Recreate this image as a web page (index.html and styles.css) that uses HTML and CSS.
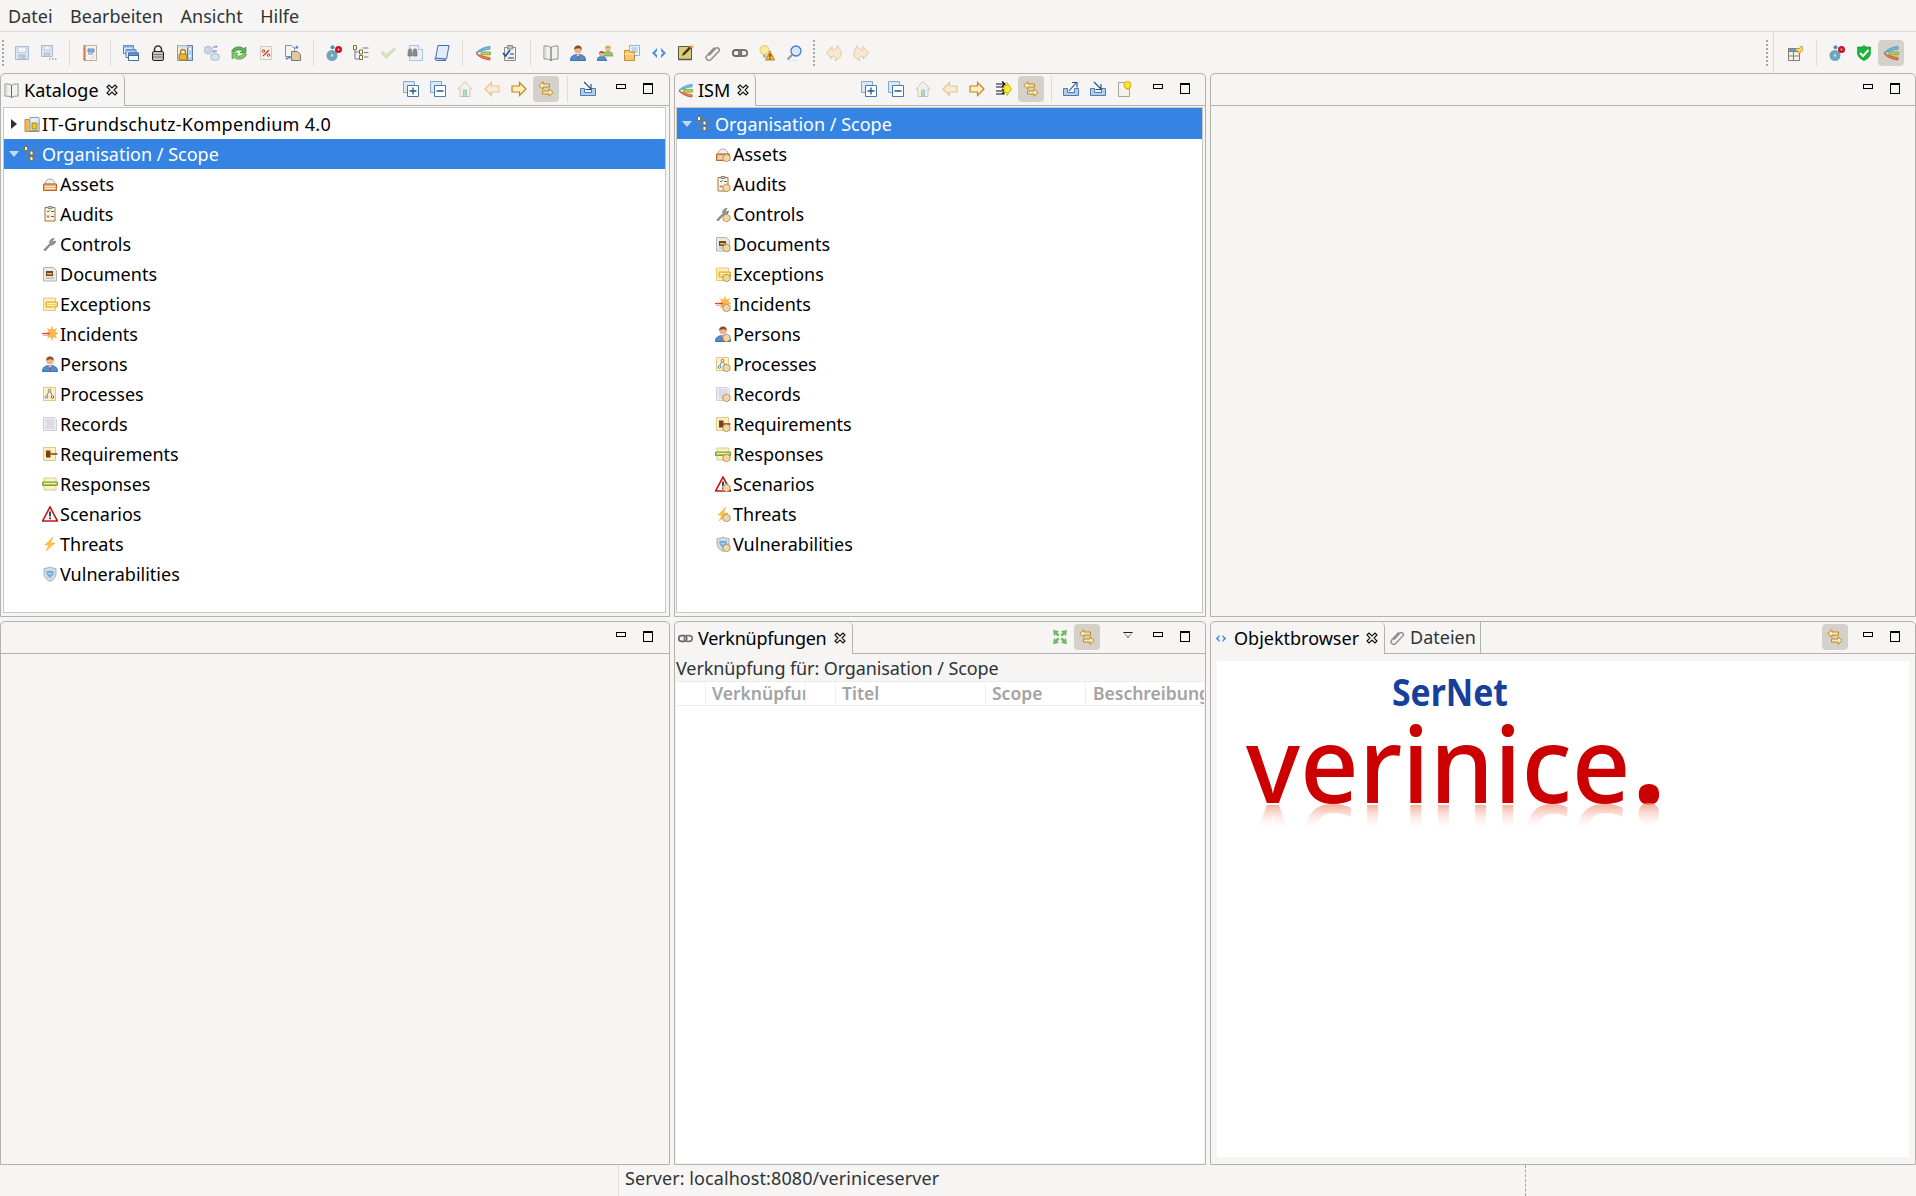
FILE: index.html
```html
<!DOCTYPE html>
<html lang="de">
<head>
<meta charset="utf-8">
<title>verinice</title>
<link rel="stylesheet" href="styles.css">
</head>
<body>
<svg class="sprite" xmlns="http://www.w3.org/2000/svg">
<symbol id="save" viewBox="0 0 16 16"><path d="M1.500 1.500h13v13h-13z" fill="#dde4ee" stroke="#a9b9cf"/><path d="M4 2v5.500h8V2z" fill="#f3f5f8" stroke="#c0cad8"/><path d="M5 14.500v-4.500h6v4.500z" fill="#c9d3e0" stroke="#a9b9cf"/><path d="M9 11.500v2" stroke="#8fa2bb"/></symbol>
<symbol id="saveall" viewBox="0 0 16 16"><path d="M.5 .5h11v11H.5z" fill="#dde4ee" stroke="#a9b9cf"/><path d="M3 1v4h6V1z" fill="#f3f5f8" stroke="#c0cad8"/><path d="M3.500 11.500V8h5v3.500z" fill="#c9d3e0" stroke="#a9b9cf"/><path d="M8 14h1.500M11 14h1.500M14 14h1.500" stroke="#8fa2bb" stroke-width="1.500"/></symbol>
<symbol id="notebook" viewBox="0 0 16 16"><path d="M2.500 .5h12v15h-12z" fill="#f6f3ec" stroke="#b9b2a2"/><path d="M2.500 .5v15" stroke="#c9622f" stroke-width="2"/><path d="M2 2.500h2M2 5h2M2 7.500h2M2 10h2M2 12.500h2" stroke="#e9a47a"/><path d="M6 4h6v3H6zM6 9h5" fill="#8fb1dd" stroke="#5f8ac4"/><path d="M9 14l4-4" stroke="#cfcabc"/></symbol>
<symbol id="windows" viewBox="0 0 16 16"><path d="M.5 .5h10v8H.5z" fill="#dbe7f6" stroke="#4f7db5"/><path d="M.5 .5h10v2H.5z" fill="#7ea8dc"/><path d="M3 4.500h10v8H3z" fill="#e9f0fa" stroke="#4f7db5"/><path d="M3 4.500h10v2H3z" fill="#7ea8dc"/><path d="M5.500 8h10v7.500h-10z" fill="#fff" stroke="#3e6ea8"/><path d="M5.500 8h10v2.500h-10z" fill="#6d9bd6" stroke="#3e6ea8"/></symbol>
<symbol id="padlock" viewBox="0 0 16 16"><path d="M4.500 7V4.500a3.500 3.500 0 0 1 7 0V7" fill="none" stroke="#333" stroke-width="1.600"/><rect x="2.500" y="6.500" width="11" height="9" rx="1.500" fill="#c4c4c4" stroke="#222"/><path d="M3 9.500h10M3 12h10" stroke="#777"/></symbol>
<symbol id="lockpanel" viewBox="0 0 16 16"><path d="M.5 .5h15v15H.5z" fill="#f1eedf" stroke="#a39c70"/><path d="M10.500 .5h5v15h-5z" fill="#b5cfea" stroke="#5c7ca6"/><path d="M12 3h2v2h-2zM12 10h2v2h-2z" fill="#fff"/><path d="M1 .5h9.500v2H1z" fill="#c5dbf1"/><path d="M3.500 9V7a2.500 2.500 0 0 1 5 0v2" fill="none" stroke="#a5812a" stroke-width="1.300"/><rect x="2" y="9" width="8" height="6" rx="1" fill="#e7b732" stroke="#9a7516"/></symbol>
<symbol id="cubes" viewBox="0 0 16 16"><path d="M4 1l4 2v4L4 9 0 7V3z" fill="#c9d7e6" stroke="#a6bbd2"/><path d="M11 8l4 2v4l-4 2-4-2v-4z" fill="#d5e1ec" stroke="#a6bbd2"/><path d="M9 2h4l-1-1.500M13 6H9l1 1.500" fill="none" stroke="#6a70d8"/></symbol>
<symbol id="refresh" viewBox="0 0 16 16"><path d="M.5 7a7.500 6.500 0 0 1 12.500-3.500l2-1.500v6h-6l2-2a4.500 4 0 0 0-7 1z" fill="#5eb350" stroke="#3a8a30" stroke-width=".6"/><path d="M15.500 9a7.500 6.500 0 0 1-12.500 3.500L1 14V8h6l-2 2a4.500 4 0 0 0 7-1z" fill="#84c96e" stroke="#3a8a30" stroke-width=".6"/></symbol>
<symbol id="percent" viewBox="0 0 16 16"><path d="M2.500 1.500h11v13h-11z" fill="#f4f2ee" stroke="#cdcac4"/><path d="M5 11l6-6" stroke="#d33c1d" stroke-width="1.300"/><circle cx="5.500" cy="6" r="1.300" fill="none" stroke="#d33c1d"/><circle cx="10.500" cy="10" r="1.300" fill="none" stroke="#d33c1d"/></symbol>
<symbol id="transfer" viewBox="0 0 16 16"><path d="M.5 .5h6l3 3v8H.5z" fill="#f5f5f2" stroke="#8d8f90"/><path d="M6.500 6.500h6l3 3v6h-9z" fill="#dbc9a5" stroke="#8b7a58"/><path d="M9 3h4M11 1l2 2M1 13h4l-1.500-1.500M1 13l1.500 1.500" fill="none" stroke="#3f7fd1" stroke-width="1.200"/></symbol>
<symbol id="gismo" viewBox="0 0 16 16"><circle cx="6" cy="10.500" r="5.500" fill="#6ea6be"/><circle cx="6" cy="10.500" r="1.200" fill="#cfe2ea"/><circle cx="6.500" cy="2.200" r="2" fill="#4d94b4"/><circle cx="12.500" cy="4.500" r="3.500" fill="#c81420"/><circle cx="12.500" cy="4.500" r="1" fill="#f6c8c8"/></symbol>
<symbol id="tree" viewBox="0 0 16 16"><path d="M2 3v11M2 7h5M2 14h5M9.500 3h6M11 7.500h4.500M11 12h4.500" fill="none" stroke="#6f7f9a"/><path d="M.5 .5h3v4h-3zM6.500 5h3v4h-3zM6.500 10.500h3v4h-3z" fill="#fff" stroke="#8a6d2c"/></symbol>
<symbol id="check" viewBox="0 0 16 16"><path d="M1 8l2.500-1.500L6 9.500 14 3l1.500 1.500-9 9z" fill="#d6e2c0" stroke="#c5d3aa" stroke-width=".6"/></symbol>
<symbol id="binoc" viewBox="0 0 16 16"><path d="M2.500 .5h9l4 4v11h-13z" fill="#e8f0fa" stroke="#a9c3e3"/><path d="M11.500 .5v4h4" fill="#fff" stroke="#a9c3e3"/><path d="M1 7l1-3h2l1 3v4H1zM6 7l1-3h2l1 3v4H6z" fill="#8a8a8a" stroke="#6a6a6a" stroke-width=".6"/></symbol>
<symbol id="scroll" viewBox="0 0 16 16"><path d="M4 .5h11l-2.500 13.500H1.500z" fill="#e2ecf8" stroke="#3e6fb3"/><path d="M1 13c0 2 1 2.500 2 2.500h9c-1 0-1.500-.5-1.500-1.500z" fill="#c2d6ef" stroke="#3e6fb3"/></symbol>
<symbol id="ism" viewBox="0 0 16 16"><path d="M15 1.500C9 2 4 4.500 1 8c4-1.500 9-3.500 14-4z" fill="#7bc1e8" stroke="#3e89c2" stroke-width=".8"/><path d="M6 7h9.500v2.800H6z" fill="#b7d44f" stroke="#78a22b" stroke-width=".8"/><path d="M1 8.500c3 3.500 8 6 14 6.500v-2.500c-5-.5-10-2-14-4z" fill="#ef7f5a" stroke="#c64a25" stroke-width=".8"/></symbol>
<symbol id="clipcheck" viewBox="0 0 16 16"><path d="M2.500 2.500h11v13h-11z" fill="#eef0f3" stroke="#8f8879"/><path d="M5.500 .5h5V4h-5z" fill="#c8c3b5" stroke="#8f8879"/><path d="M1 8l2.500 3L8 5" fill="none" stroke="#2058b8" stroke-width="1.800"/><path d="M8 9h4M6 13h6" stroke="#3a3a3a"/></symbol>
<symbol id="book" viewBox="0 0 16 16"><path d="M8 2.500C6 1 3 .8 1 1v13c2-.2 5 0 7 1.500 2-1.500 5-1.700 7-1.500V1c-2-.2-5 0-7 1.500z" fill="#f0f3f0" stroke="#8b8d86"/><path d="M8 2.500v13" stroke="#5a5a55"/><path d="M2.500 2.500v10" stroke="#d6dcd5" stroke-width="2"/></symbol>
<symbol id="person" viewBox="0 0 16 16"><path d="M.5 15.500c0-4 2.500-6 7.500-6s7.500 2 7.500 6z" fill="#4f8ed0" stroke="#2b5c94" stroke-width=".8"/><path d="M6.500 9.500L8 13l1.500-3.500z" fill="#fff"/><path d="M7.500 10.500h1l.5 3H7z" fill="#c0392b"/><circle cx="8" cy="5" r="3.600" fill="#eab48c"/><path d="M4.300 5c-.5-3.500 2-4.500 3.700-4.500s4.200 1 3.700 4.500C11 3.500 9.500 3 8 3.200S5 3.500 4.300 5z" fill="#8a4c20"/></symbol>
<symbol id="persons" viewBox="0 0 16 16"><path d="M6 11c0-3 2-4.500 5-4.500s5 1.500 5 4.500z" fill="#9cc56b" stroke="#6c9440" stroke-width=".7"/><circle cx="11" cy="3.500" r="2.700" fill="#eeb888"/><path d="M8.300 3c0-3 5.400-3 5.400 0-1.500-1-3.900-1-5.400 0z" fill="#d59532"/><path d="M0 16c0-3.200 2-4.500 4.800-4.500S9.500 12.800 9.500 16z" fill="#4f8ed0" stroke="#2b5c94" stroke-width=".7"/><circle cx="4.800" cy="8.800" r="2.700" fill="#eab48c"/><path d="M2 8.500c0-3 5.500-3 5.500 0-1.500-1-4-1-5.500 0z" fill="#8a4c20"/></symbol>
<symbol id="folderdoc" viewBox="0 0 16 16"><path d="M5.500 .5h10v10h-10z" fill="#eef4fb" stroke="#8fb1dd"/><path d="M7.500 3h6M7.500 5h6M7.500 7h6" stroke="#8fb1dd"/><path d="M.5 5.500h5l1 1.500h4v8.500H.5z" fill="#f7c671" stroke="#c98a24"/><path d="M.5 9h10" stroke="#fbe0ab" stroke-width="1.500"/></symbol>
<symbol id="code" viewBox="0 0 16 16"><path d="M6 3L1 8l5 5v-3L4 8l2-2zM10 3l5 5-5 5v-3l2-2-2-2z" fill="#4b93e2"/></symbol>
<symbol id="note" viewBox="0 0 16 16"><path d="M.5 1.500h13v13H.5z" fill="#d8cd80" stroke="#5d5730"/><path d="M.5 14.500h13" stroke="#5d5730" stroke-width="1.500"/><path d="M4 11l1-3 7-7 2.500 1-7.500 7.500z" fill="#4a3a10"/><path d="M11 1.500L14 0l1.500 1.500-1.500 2z" fill="#e8a838"/></symbol>
<symbol id="paperclip" viewBox="0 0 16 16"><path d="M4 10.500L11 3a2.200 2.200 0 0 1 3 3l-8 8.500a2.800 2.800 0 0 1-4-4l7.500-8" fill="none" stroke="#8f8f8f" stroke-width="1.500"/></symbol>
<symbol id="link" viewBox="0 0 16 16"><rect x=".8" y="5" width="8.500" height="6" rx="3" fill="none" stroke="#666" stroke-width="1.800"/><rect x="6.700" y="5" width="8.500" height="6" rx="3" fill="none" stroke="#777" stroke-width="1.800"/></symbol>
<symbol id="bulb" viewBox="0 0 16 16"><circle cx="5.500" cy="5" r="4.500" fill="#fae9a0" stroke="#e3c55c"/><path d="M4 9.500h3v3H4z" fill="#9cb4cc"/><path d="M11 6l4.500 9h-9z" fill="#f4b638" stroke="#c77d18"/><path d="M11 9v3M11 13v1.200" stroke="#222" stroke-width="1.200"/></symbol>
<symbol id="search" viewBox="0 0 16 16"><circle cx="10" cy="6" r="5" fill="#d8e5fa" stroke="#4a75d4" stroke-width="1.300"/><path d="M6.500 9.500l-5 5" stroke="#999" stroke-width="2.200"/><path d="M2 15.800h10" stroke="#ddd"/></symbol>
<symbol id="undo" viewBox="0 0 16 16"><path d="M12 .5C13 4 16 6 15 10c-.5 2.500-3 4.500-6 5.500 1-1.500 1-3-.5-4-1-.5-2-.5-3 0L6 14 .5 8 6 1.500 6 5c2 .5 4-1 6-4.500z" fill="#f6e7d2" stroke="#e5c89c"/></symbol>
<symbol id="redo" viewBox="0 0 16 16"><path d="M4 .5C3 4 0 6 1 10c.5 2.500 3 4.500 6 5.500-1-1.500-1-3 .5-4 1-.5 2-.5 3 0L10 14l5.500-6L10 1.500V5C8 5.500 6 4 4 .5z" fill="#f6e7d2" stroke="#e5c89c"/></symbol>
<symbol id="newview" viewBox="0 0 16 16"><path d="M1.500 3.500h11v12h-11z" fill="#f3f2ee" stroke="#857e6c"/><path d="M1.500 3.500h11v3h-11z" fill="#5f9ce0" stroke="#857e6c"/><path d="M6.500 6.500v9M1.500 11h11" stroke="#857e6c"/><path d="M11 3.500h2V1.500h2.500v2h.5V6h-2.500v2H11V6H9V3.500z" fill="#f8dc7a" stroke="#c1972a" stroke-width=".7"/></symbol>
<symbol id="shield" viewBox="0 0 16 16"><path d="M8 .5L10 2h4.500v6c0 3.500-3 6-6.500 7.500C4.500 14 1.500 11.500 1.500 8V2H6z" fill="#1cb33f" stroke="#128a2c" stroke-width=".6"/><path d="M4 8l3 3 5.500-6" fill="none" stroke="#fff" stroke-width="2"/></symbol>
<symbol id="expand" viewBox="0 0 16 16"><path d="M.5 .5h11v11H.5z" fill="#dbe7f3" stroke="#8aa8c8"/><path d="M4.500 4.500h11v11h-11z" fill="#fff" stroke="#4a7aa8"/><path d="M6.500 10h7M10 6.500v7" stroke="#135a9c" stroke-width="1.300"/></symbol>
<symbol id="collapse" viewBox="0 0 16 16"><path d="M.5 .5h11v11H.5z" fill="#dbe7f3" stroke="#8aa8c8"/><path d="M4.500 4.500h11v11h-11z" fill="#fff" stroke="#4a7aa8"/><path d="M6.500 10h7" stroke="#135a9c" stroke-width="1.300"/></symbol>
<symbol id="home" viewBox="0 0 16 16"><path d="M8 .5L1 8h2v7.500h10V8h2z" fill="#f2f0e9" stroke="#cbc7b7"/><path d="M6.500 9h3v6.500h-3z" fill="#b9dfa0" stroke="#9cc1dc"/></symbol>
<symbol id="back" viewBox="0 0 16 16"><path d="M1 8l6.500-6.500V5H15v6H7.500v3.500z" fill="#f7ecd8" stroke="#e6c58a" stroke-width="1.200"/></symbol>
<symbol id="forward" viewBox="0 0 16 16"><path d="M15 8L8.500 1.500V5H1v6h7.500v3.500z" fill="#fbeec6" stroke="#c98413" stroke-width="1.200"/></symbol>
<symbol id="sync" viewBox="0 0 16 16"><path d="M.8 4.500L5 .7v2.300h6.500v3H5v2.300z" fill="#f7e9c2" stroke="#c48612"/><path d="M15.200 11.500L11 7.700V10H4.500v3H11v2.300z" fill="#f7e9c2" stroke="#c48612"/></symbol>
<symbol id="filter" viewBox="0 0 16 16"><path d="M0 3h9M0 6h9M0 10h9M0 13h9M6 .5L9 3 6 5.500M6 8l3 2-3 3" fill="none" stroke="#111" stroke-width="1.200"/><path d="M8 4.500h3V1.500L15.500 8 11 14.500V11.500H8z" fill="#f4ee1c" stroke="#a9a40c" stroke-width=".7"/></symbol>
<symbol id="export" viewBox="0 0 16 16"><path d="M.5 7.500h4v4h7v-4h4v7H.5z" fill="#b5cdea" stroke="#4f7cb4"/><path d="M6 10l7-8M9 1.500h5v5" fill="none" stroke="#1c4f8e" stroke-width="1.100"/></symbol>
<symbol id="import" viewBox="0 0 16 16"><path d="M.5 7.500h4v4h7v-4h4v7H.5z" fill="#b5cdea" stroke="#4f7cb4"/><path d="M4 1l7 7M11 3v5.500H5.500" fill="none" stroke="#1c4f8e" stroke-width="1.100"/></symbol>
<symbol id="notebulb" viewBox="0 0 16 16"><path d="M1.500 1.500h11v14h-11z" fill="#f4f3ee" stroke="#a8a69c"/><circle cx="10.500" cy="4" r="3.600" fill="#f8e23c" stroke="#dcb21a"/><path d="M9 7h3v1.500H9z" fill="#dcb21a"/></symbol>
<symbol id="close" viewBox="0 0 12 12"><path d="M1 3l2-2 3 3 3-3 2 2-3 3 3 3-2 2-3-3-3 3-2-2 3-3z" fill="#fff" stroke="#111" stroke-width="1.100"/></symbol>
<symbol id="linkmini" viewBox="0 0 16 16"><path d="M1 1l6 1-1.500 1.500L7.500 6 6 7.500 3.500 5.500 2 7zM15 1l-1 6-1.500-1.500L10 7.500 8.500 6l2-2.500L9 2zM1 15l1-6 1.500 1.500L6 8.500 7.500 10l-2 2.500L7 14zM15 15l-6-1 1.500-1.500L8.500 10 10 8.500l2.500 2L14 9z" fill="#6cba62"/></symbol>
<symbol id="t-assets" viewBox="0 0 16 16"><path d="M3 8a5 5 0 0 1 10 0z" fill="#f0f0ee" stroke="#aaa"/><path d="M1.500 8h13v6.500h-13z" fill="#edac70" stroke="#b96a27"/><path d="M3 10.500h10M3 12.500h10" stroke="#fdf0d8"/></symbol>
<symbol id="t-audits" viewBox="0 0 16 16"><path d="M3 1.500h10V15H3z" fill="#faf4e6" stroke="#a0743e"/><path d="M6 .5h4v2H6z" fill="#ccc" stroke="#888"/><path d="M5 5l1 1 2-2" fill="none" stroke="#3b9c35"/><path d="M5 9.500l2 2m0-2l-2 2" stroke="#c83227"/><path d="M9 5.500h3M9 10.500h3" stroke="#666"/></symbol>
<symbol id="t-controls" viewBox="0 0 16 16"><path d="M2 13.500l6-6c-1-2.500 1-5 4-5l-1.500 2 1 1.500 2-1c0 3-3 4.500-5 4l-5.500 6z" fill="#999" stroke="#666" stroke-width=".7"/></symbol>
<symbol id="t-documents" viewBox="0 0 16 16"><path d="M1.500 1.500h10l3 3V15h-13z" fill="#e9e9e6" stroke="#b4b4ae"/><path d="M4 5h7v5H4z" fill="#6b4a1d"/><path d="M5 7h5v1.500H5z" fill="#e6c066"/><path d="M4 12h8" stroke="#aaa"/></symbol>
<symbol id="t-exceptions" viewBox="0 0 16 16"><path d="M1.500 2h12v12.500h-12z" fill="#fdeeb8" stroke="#ecc876"/><path d="M4 6h11.500v5H4z" fill="#f9cf5a" stroke="#e3ab2c"/><path d="M5 7.500h9M5 9.500h9" stroke="#fff1c0"/></symbol>
<symbol id="t-incidents" viewBox="0 0 16 16"><path d="M10 .5l1.200 3.500 3.300-1.500L13 5.800 16 7.500 13 8.800l1.500 3.200-3.300-1.500L10 14.500 8.800 10.500 5.500 12 7 8.800 4 7.500 7 5.800 5.500 2.500 8.800 4z" fill="#fbb84a" stroke="#f0a738" stroke-width=".5"/><path d="M0 7.500h8" stroke="#dc4738" stroke-width="1.300"/><path d="M1 9.300h7" stroke="#f29a8c"/></symbol>
<symbol id="t-processes" viewBox="0 0 16 16"><path d="M1.500 1.500h12v13h-12z" fill="#fcf1c7" stroke="#dfc98a"/><circle cx="7.500" cy="4.500" r="1.300" fill="#fff" stroke="#c15b2c"/><circle cx="4.500" cy="11" r="1.300" fill="#fff" stroke="#4e86c4"/><circle cx="10.500" cy="11" r="1.300" fill="#fff" stroke="#c83a2a"/><path d="M6.500 6L5 9.500M8.500 6L10 9.500" stroke="#5a8dc8"/></symbol>
<symbol id="t-records" viewBox="0 0 16 16"><path d="M1.500 1.500h11l2 2v11h-13z" fill="#eeedf3" stroke="#d0cfd6"/><path d="M3.500 4h9M3.500 6h9M3.500 8h9M3.500 10h9M3.500 12h9" stroke="#cbc8de"/></symbol>
<symbol id="t-requirements" viewBox="0 0 16 16"><path d="M1.500 1.500h12v13h-12z" fill="#fcefc0" stroke="#dfc98a"/><path d="M4 4.500h4.500v7H4z" fill="#7c3c14"/><path d="M8.500 8h7" stroke="#7c3c14" stroke-width="1.500"/></symbol>
<symbol id="t-responses" viewBox="0 0 16 16"><path d="M2 2h12v12H2z" fill="#fcf0c6" stroke="#dfc98a"/><path d="M.5 6h15v3.500H.5z" fill="#a7c850" stroke="#7fa431"/><path d="M2 7.500h12" stroke="#e8f5b8"/></symbol>
<symbol id="t-scenarios" viewBox="0 0 16 16"><path d="M8 1l7.500 14H.5z" fill="#fff" stroke="#c21a1a" stroke-width="1.600"/><path d="M8 5.500v5M8 11.500v1.800" stroke="#333" stroke-width="1.800"/></symbol>
<symbol id="t-threats" viewBox="0 0 16 16"><path d="M11 1L3 9h4l-3 6 9-8H8.500z" fill="#fbc341" stroke="#f3a620" stroke-width=".5"/></symbol>
<symbol id="t-vuln" viewBox="0 0 16 16"><path d="M8 1c2 1 4 1.500 6 1.500V8c0 3.500-3 6-6 7.500C5 14 2 11.500 2 8V2.500C4 2.500 6 2 8 1z" fill="#d3dbe2" stroke="#a7b1ba"/><path d="M4.500 5h7v3L8 12 4.500 8z" fill="#6aa6de"/><path d="M6 6.500l2 2 2-2" fill="none" stroke="#fff"/></symbol>
<symbol id="t-scope" viewBox="0 0 16 16"><path d="M2 3v11M2 7h5M2 13h5M9.500 3h6M11 7.500h4.500M11 12.500h4.500" fill="none" stroke="#6f7f9a"/><path d="M.5 .5h3v4h-3zM6 5h3v4H6zM6 10.500h3v4H6z" fill="#fff" stroke="#8a6d2c"/></symbol>
<symbol id="t-bsi" viewBox="0 0 16 16"><path d="M1 3.500h4L6 5h9v10.500H1z" fill="#f3b75e" stroke="#c58a33"/><path d="M6 1.500h9v13H6z" fill="#e6f0fa" stroke="#7ea2c8"/><path d="M8 7h5v6H8z" fill="#eec52e" stroke="#a98a1a"/></symbol>
<symbol id="badge" viewBox="0 0 16 16"><path d="M11.500 8l3.500 2v4l-3.500 2L8 14v-4z" fill="#f4d7a0" stroke="#a5854a" stroke-width=".8"/></symbol>
</svg>

<div class="app">
  <nav class="menubar"><span>Datei</span><span>Bearbeiten</span><span>Ansicht</span><span>Hilfe</span></nav>

  <div class="toolbar">
    <i class="grip grip-first"></i>
    <span class="btn"><svg class="ic"><use href="#save"/></svg></span>
    <span class="btn"><svg class="ic"><use href="#saveall"/></svg></span>
    <i class="sep"></i>
    <span class="btn"><svg class="ic"><use href="#notebook"/></svg></span>
    <i class="sep"></i>
    <span class="btn"><svg class="ic"><use href="#windows"/></svg></span>
    <span class="btn"><svg class="ic"><use href="#padlock"/></svg></span>
    <span class="btn"><svg class="ic"><use href="#lockpanel"/></svg></span>
    <span class="btn"><svg class="ic"><use href="#cubes"/></svg></span>
    <span class="btn"><svg class="ic"><use href="#refresh"/></svg></span>
    <span class="btn"><svg class="ic"><use href="#percent"/></svg></span>
    <span class="btn"><svg class="ic"><use href="#transfer"/></svg></span>
    <i class="sep"></i>
    <span class="btn"><svg class="ic"><use href="#gismo"/></svg></span>
    <span class="btn"><svg class="ic"><use href="#tree"/></svg></span>
    <span class="btn"><svg class="ic"><use href="#check"/></svg></span>
    <span class="btn"><svg class="ic"><use href="#binoc"/></svg></span>
    <span class="btn"><svg class="ic"><use href="#scroll"/></svg></span>
    <i class="sep"></i>
    <span class="btn"><svg class="ic"><use href="#ism"/></svg></span>
    <span class="btn"><svg class="ic"><use href="#clipcheck"/></svg></span>
    <i class="sep"></i>
    <span class="btn"><svg class="ic"><use href="#book"/></svg></span>
    <span class="btn"><svg class="ic"><use href="#person"/></svg></span>
    <span class="btn"><svg class="ic"><use href="#persons"/></svg></span>
    <span class="btn"><svg class="ic"><use href="#folderdoc"/></svg></span>
    <span class="btn"><svg class="ic"><use href="#code"/></svg></span>
    <span class="btn"><svg class="ic"><use href="#note"/></svg></span>
    <span class="btn"><svg class="ic"><use href="#paperclip"/></svg></span>
    <span class="btn"><svg class="ic"><use href="#link"/></svg></span>
    <span class="btn"><svg class="ic"><use href="#bulb"/></svg></span>
    <span class="btn"><svg class="ic"><use href="#search"/></svg></span>
    <i class="grip grip-mid"></i>
    <span class="btn"><svg class="ic"><use href="#undo"/></svg></span>
    <span class="btn"><svg class="ic"><use href="#redo"/></svg></span>
    <div class="toolbar-right">
      <i class="grip grip-right"></i>
      <div class="persp">
        <span class="btn"><svg class="ic"><use href="#newview"/></svg></span>
        <i class="sep"></i>
        <span class="btn"><svg class="ic"><use href="#gismo"/></svg></span>
        <span class="btn"><svg class="ic"><use href="#shield"/></svg></span>
        <span class="btn active"><svg class="ic"><use href="#ism"/></svg></span>
      </div>
    </div>
  </div>

  <main class="panes">
    <section class="pane">
      <header class="pane-head">
        <div class="tab"><svg class="tab-ic"><use href="#book"/></svg><span class="tab-label">Kataloge</span><svg class="tab-x"><use href="#close"/></svg></div>
        <div class="head-fill head-fill-left">
          <span class="btn"><svg class="ic"><use href="#expand"/></svg></span>
          <span class="btn"><svg class="ic"><use href="#collapse"/></svg></span>
          <span class="btn"><svg class="ic"><use href="#home"/></svg></span>
          <span class="btn"><svg class="ic"><use href="#back"/></svg></span>
          <span class="btn"><svg class="ic"><use href="#forward"/></svg></span>
          <span class="btn active"><svg class="ic"><use href="#sync"/></svg></span>
          <i class="sep sep-wide"></i>
          <span class="btn"><svg class="ic"><use href="#import"/></svg></span>
          <i class="gap6"></i>
          <span class="btn"><i class="win-min"></i></span>
          <span class="btn"><i class="win-max"></i></span>
        </div>
      </header>
      <div class="tree tree-left">
        <div class="row row-wide"><i class="arrow arrow-closed"></i><svg class="ti"><use href="#t-bsi"/></svg><span>IT-Grundschutz-Kompendium 4.0</span></div>
        <div class="row selected"><i class="arrow arrow-open"></i><svg class="ti"><use href="#t-scope"/></svg><span>Organisation / Scope</span></div>
        <div class="row child"><svg class="ti"><use href="#t-assets"/></svg><span>Assets</span></div>
        <div class="row child"><svg class="ti"><use href="#t-audits"/></svg><span>Audits</span></div>
        <div class="row child"><svg class="ti"><use href="#t-controls"/></svg><span>Controls</span></div>
        <div class="row child"><svg class="ti"><use href="#t-documents"/></svg><span>Documents</span></div>
        <div class="row child"><svg class="ti"><use href="#t-exceptions"/></svg><span>Exceptions</span></div>
        <div class="row child"><svg class="ti"><use href="#t-incidents"/></svg><span>Incidents</span></div>
        <div class="row child"><svg class="ti"><use href="#person"/></svg><span>Persons</span></div>
        <div class="row child"><svg class="ti"><use href="#t-processes"/></svg><span>Processes</span></div>
        <div class="row child"><svg class="ti"><use href="#t-records"/></svg><span>Records</span></div>
        <div class="row child"><svg class="ti"><use href="#t-requirements"/></svg><span>Requirements</span></div>
        <div class="row child"><svg class="ti"><use href="#t-responses"/></svg><span>Responses</span></div>
        <div class="row child"><svg class="ti"><use href="#t-scenarios"/></svg><span>Scenarios</span></div>
        <div class="row child"><svg class="ti"><use href="#t-threats"/></svg><span>Threats</span></div>
        <div class="row child"><svg class="ti"><use href="#t-vuln"/></svg><span>Vulnerabilities</span></div>
      </div>
    </section>

    <section class="pane">
      <header class="pane-head">
        <div class="tab"><svg class="tab-ic"><use href="#ism"/></svg><span class="tab-label">ISM</span><svg class="tab-x"><use href="#close"/></svg></div>
        <div class="head-fill">
          <span class="btn"><svg class="ic"><use href="#expand"/></svg></span>
          <span class="btn"><svg class="ic"><use href="#collapse"/></svg></span>
          <span class="btn"><svg class="ic"><use href="#home"/></svg></span>
          <span class="btn"><svg class="ic"><use href="#back"/></svg></span>
          <span class="btn"><svg class="ic"><use href="#forward"/></svg></span>
          <span class="btn"><svg class="ic"><use href="#filter"/></svg></span>
          <span class="btn active"><svg class="ic"><use href="#sync"/></svg></span>
          <i class="sep sep-mid"></i>
          <span class="btn"><svg class="ic"><use href="#export"/></svg></span>
          <span class="btn"><svg class="ic"><use href="#import"/></svg></span>
          <span class="btn"><svg class="ic"><use href="#notebulb"/></svg></span>
          <i class="gap6"></i>
          <span class="btn"><i class="win-min"></i></span>
          <span class="btn"><i class="win-max"></i></span>
        </div>
      </header>
      <div class="tree tree-mid">
        <div class="row selected"><i class="arrow arrow-open"></i><svg class="ti"><use href="#t-scope"/></svg><span>Organisation / Scope</span></div>
        <div class="row child"><svg class="ti"><use href="#t-assets"/><use href="#badge"/></svg><span>Assets</span></div>
        <div class="row child"><svg class="ti"><use href="#t-audits"/><use href="#badge"/></svg><span>Audits</span></div>
        <div class="row child"><svg class="ti"><use href="#t-controls"/><use href="#badge"/></svg><span>Controls</span></div>
        <div class="row child"><svg class="ti"><use href="#t-documents"/><use href="#badge"/></svg><span>Documents</span></div>
        <div class="row child"><svg class="ti"><use href="#t-exceptions"/><use href="#badge"/></svg><span>Exceptions</span></div>
        <div class="row child"><svg class="ti"><use href="#t-incidents"/><use href="#badge"/></svg><span>Incidents</span></div>
        <div class="row child"><svg class="ti"><use href="#person"/><use href="#badge"/></svg><span>Persons</span></div>
        <div class="row child"><svg class="ti"><use href="#t-processes"/><use href="#badge"/></svg><span>Processes</span></div>
        <div class="row child"><svg class="ti"><use href="#t-records"/><use href="#badge"/></svg><span>Records</span></div>
        <div class="row child"><svg class="ti"><use href="#t-requirements"/><use href="#badge"/></svg><span>Requirements</span></div>
        <div class="row child"><svg class="ti"><use href="#t-responses"/><use href="#badge"/></svg><span>Responses</span></div>
        <div class="row child"><svg class="ti"><use href="#t-scenarios"/><use href="#badge"/></svg><span>Scenarios</span></div>
        <div class="row child"><svg class="ti"><use href="#t-threats"/><use href="#badge"/></svg><span>Threats</span></div>
        <div class="row child"><svg class="ti"><use href="#t-vuln"/><use href="#badge"/></svg><span>Vulnerabilities</span></div>
      </div>
    </section>

    <section class="pane">
      <header class="pane-head">
        <div class="head-fill">
          <span class="btn"><i class="win-min"></i></span>
          <span class="btn"><i class="win-max"></i></span>
        </div>
      </header>
    </section>

    <section class="pane">
      <header class="pane-head">
        <div class="head-fill head-fill-left">
          <span class="btn"><i class="win-min"></i></span>
          <span class="btn"><i class="win-max"></i></span>
        </div>
      </header>
    </section>

    <section class="pane">
      <header class="pane-head">
        <div class="tab"><svg class="tab-ic"><use href="#link"/></svg><span class="tab-label tab-label-tight">Verknüpfungen</span><svg class="tab-x"><use href="#close"/></svg></div>
        <div class="head-fill">
          <span class="btn"><svg class="ic"><use href="#linkmini"/></svg></span>
          <span class="btn active"><svg class="ic"><use href="#sync"/></svg></span>
          <i class="gap14"></i>
          <span class="btn"><i class="view-menu"></i></span>
          <i class="gap3"></i>
          <span class="btn"><i class="win-min"></i></span>
          <span class="btn"><i class="win-max"></i></span>
        </div>
      </header>
      <div class="link-label">Verknüpfung für: Organisation / Scope</div>
      <div class="link-table">
        <div class="thead">
          <div class="th th-a"></div>
          <div class="th th-b">Verknüpfung</div>
          <div class="th th-c"></div>
          <div class="th th-d">Titel</div>
          <div class="th th-e">Scope</div>
          <div class="th th-f">Beschreibung</div>
        </div>
      </div>
    </section>

    <section class="pane">
      <header class="pane-head">
        <div class="tab"><svg class="tab-ic tab-ic-small"><use href="#code"/></svg><span class="tab-label">Objektbrowser</span><svg class="tab-x"><use href="#close"/></svg></div>
        <div class="tab tab-off"><svg class="tab-ic"><use href="#paperclip"/></svg><span class="tab-label">Dateien</span></div>
        <div class="head-fill">
          <span class="btn active"><svg class="ic"><use href="#sync"/></svg></span>
          <i class="gap6"></i>
          <span class="btn"><i class="win-min"></i></span>
          <span class="btn"><i class="win-max"></i></span>
        </div>
      </header>
      <div class="browser">
        <svg class="logo" viewBox="0 0 691 200">
          <defs>
            <linearGradient id="fade" gradientUnits="userSpaceOnUse" x1="0" y1="142" x2="0" y2="116">
              <stop offset="0" stop-color="#f39a84" stop-opacity=".75"/>
              <stop offset="1" stop-color="#fff" stop-opacity="0"/>
            </linearGradient>
          </defs>
          <text class="logo-ser" x="175" y="45" textLength="116" lengthAdjust="spacingAndGlyphs">SerNet</text>
          <text class="logo-ver logo-red" x="29" y="142" textLength="421" lengthAdjust="spacingAndGlyphs">verinice<tspan class="logo-dot">.</tspan></text>
          <text class="logo-ver" x="29" y="142" textLength="421" lengthAdjust="spacingAndGlyphs" transform="translate(0 286) scale(1 -1)" fill="url(#fade)" aria-hidden="true">verinice<tspan class="logo-dot">.</tspan></text>
        </svg>
      </div>
    </section>
  </main>

  <footer class="statusbar">
    <div class="status-main">Server: localhost:8080/veriniceserver</div>
  </footer>
</div>
</body>
</html>
```
FILE: styles.css
```css
* { box-sizing: border-box; }
html, body { margin: 0; padding: 0; }
body {
  width: 1916px;
  height: 1196px;
  overflow: hidden;
  background: #f6f5f4;
  font-family: "Noto Sans", "Open Sans", sans-serif;
  font-size: 18px;
  color: #2e3436;
}
.sprite { display: none; }
.app { display: flex; flex-direction: column; height: 1196px; }

.menubar {
  height: 32px;
  flex: none;
  display: flex;
  align-items: center;
  padding: 0 0 0 8px;
  gap: 17.500px;
  border-bottom: 1px solid #dddbd7;
}

.toolbar {
  height: 41px;
  flex: none;
  display: flex;
  align-items: center;
  padding-left: 2px;
}
.btn {
  width: 27px;
  height: 26px;
  flex: none;
  display: flex;
  align-items: center;
  justify-content: center;
}
.btn.active { background: #d4d0ca; border-radius: 4px; width: 26px; margin: 0 .5px; }
.ic { width: 16px; height: 16px; display: block; }
.sep {
  width: 1px;
  height: 26px;
  flex: none;
  margin: 0 6.5px;
  background: #dfddd9;
}
.sep-wide { margin: 0 7px; }
.sep-mid { margin: 0 6px; }
.grip {
  flex: none;
  width: 2px;
  height: 26px;
  border-left: 2px dotted #a9a7a3;
}
.grip-first { margin-right: 4.5px; }
.grip-mid { margin: 0 6px 0 5px; }
.toolbar-right {
  margin-left: auto;
  height: 100%;
  display: flex;
  align-items: center;
}
.grip-right { margin-right: 5px; }
.persp {
  height: 100%;
  display: flex;
  align-items: center;
  padding: 0 11.5px 0 7.5px;
  border-left: 1px solid #dddbd7;
}
.persp .sep { margin: 0 7px; }

.panes {
  flex: none;
  height: 1092px;
  display: grid;
  grid-template-columns: 670px 532px 706px;
  grid-template-rows: 544px 544px;
  gap: 4px;
}
.pane {
  border: 1px solid #b4b2ac;
  border-radius: 5px 5px 0 0;
  display: flex;
  flex-direction: column;
  min-height: 0;
  min-width: 0;
  overflow: hidden;
}
.pane-head { flex: none; height: 32px; display: flex; }
.tab {
  flex: none;
  display: flex;
  align-items: center;
  height: 32px;
  padding: 0 6px 0 3px;
  border-right: 1px solid #b4b2ac;
  color: #000;
  border-top-right-radius: 5px;
}
.tab-off {
  border-bottom: 1px solid #b4b2ac;
  color: #2e3436;
  padding: 0 4px 0 5px;
  border-top-right-radius: 0;
}
.tab-ic { width: 15px; height: 15px; flex: none; }
.tab-ic-small { width: 12px; margin: 0 2px 0 1px; }
.tab-label { margin-left: 5px; line-height: 1; padding-bottom: 1px; }
.tab-label-tight { letter-spacing: -.25px; }
.tab-x { width: 12px; height: 12px; margin-left: 7px; flex: none; }
.head-fill {
  flex: 1;
  min-width: 0;
  display: flex;
  align-items: center;
  justify-content: flex-end;
  padding: 0 6.5px 1px 0;
  border-bottom: 1px solid #b4b2ac;
}
.head-fill-left { padding-right: 7.5px; }
.gap6 { width: 6px; flex: none; }
.gap14 { width: 14px; flex: none; }
.gap3 { width: 3px; flex: none; }
.win-min { display: block; width: 10px; height: 5px; border: 1.5px solid #000; margin-top: -6px; }
.win-max { display: block; width: 10px; height: 11px; border: 1.5px solid #000; border-top-width: 2.5px; margin-top: -2px; }
.view-menu {
  display: block;
  width: 10px;
  height: 6px;
  margin-top: -4px;
  border-top: 6px solid #222;
  border-left: 5px solid transparent;
  border-right: 5px solid transparent;
  position: relative;
}
.view-menu::after {
  content: "";
  position: absolute;
  left: -4px;
  top: -5.5px;
  border-top: 4.5px solid #f6f5f4;
  border-left: 4px solid transparent;
  border-right: 4px solid transparent;
}

.tree {
  flex: 1;
  min-height: 0;
  background: #fff;
  border: 1px solid #c9c7c2;
  color: #000;
}
.tree-left { margin: 1px 3px 3px 2px; }
.tree-mid { margin: 1px 2px 3px 1px; }
.row {
  height: 30px;
  display: flex;
  align-items: center;
  white-space: nowrap;
}
.row:first-child { height: 31px; padding-top: 1px; }
.row-wide { letter-spacing: .3px; }
.row.child { padding-left: 38px; }
.row.selected { background: #3584e4; color: #fff; }
.arrow { width: 20px; flex: none; display: flex; align-items: center; justify-content: center; }
.arrow-closed::before {
  content: "";
  border-left: 6px solid #2e3436;
  border-top: 5px solid transparent;
  border-bottom: 5px solid transparent;
}
.arrow-open::before {
  content: "";
  border-top: 6px solid #c4dcf8;
  border-left: 5px solid transparent;
  border-right: 5px solid transparent;
}
.ti { width: 16px; height: 16px; margin-right: 2px; flex: none; }

.link-label {
  flex: none;
  height: 27px;
  display: flex;
  align-items: center;
  padding-left: 1px;
  white-space: nowrap;
  letter-spacing: -.1px;
}
.link-table { flex: 1; min-height: 0; background: #fff; margin: 0 1px 1px; overflow: hidden; }
.thead {
  height: 25px;
  display: flex;
  border-bottom: 1px solid #ececea;
  border-top: 1px solid #ececea;
  font-weight: 600;
  font-size: 17.500px;
  color: #a3a3a3;
}
.th {
  flex: none;
  height: 100%;
  border-right: 1px solid #f0efed;
  overflow: hidden;
  white-space: nowrap;
  line-height: 22px;
}
.th-a { width: 30px; }
.th-b { width: 100px; padding-left: 6px; }
.th-c { width: 30px; }
.th-d { width: 150px; padding-left: 6px; }
.th-e { width: 100px; padding-left: 6px; }
.th-f { width: 120px; padding-left: 7px; border-right: 0; }

.browser {
  flex: 1;
  min-height: 0;
  margin: 7px 6px 7px 6px;
  background: #fff;
}
.logo { display: block; width: 691px; height: 200px; }
.logo-ser { font-family: "Noto Sans", sans-serif; font-weight: 700; font-size: 38px; fill: #17409a; }
.logo-ver { font-family: "Noto Sans", sans-serif; font-weight: 500; font-size: 105px; }
.logo-dot { font-size: 135px; font-weight: 600; }
.logo-red { fill: #cc0000; }

.statusbar { flex: 1; min-height: 0; padding-left: 618px; display: flex; align-items: center; }
.status-main {
  width: 908px;
  height: 100%;
  padding: 0 0 5px 6px;
  display: flex;
  align-items: center;
  color: #2e3436;
  letter-spacing: .08px;
  border-left: 1px solid #e2e0dc;
  border-right: 1px dashed #a9a7a3;
  white-space: nowrap;
}
```
